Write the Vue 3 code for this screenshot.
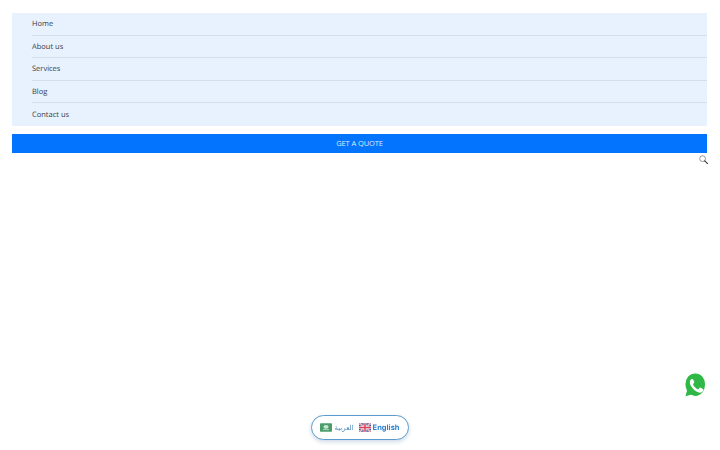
<template>
  <div class="page">
    <nav class="menu">
      <a v-for="item in items" :key="item" class="menu-item">{{ item }}</a>
    </nav>
    <button class="quote">GET A QUOTE</button>
    <div class="search-row">
      <svg class="search" viewBox="0 0 12 12" width="9" height="9">
        <circle cx="4.8" cy="4.8" r="3.9" fill="none" stroke="#555" stroke-width="0.8" />
        <path d="M7.7 7.7 11.4 11.4" stroke="#333" stroke-width="1.4" stroke-linecap="round" />
      </svg>
    </div>
    <a class="whatsapp" aria-label="WhatsApp">
      <svg viewBox="0 0 24 24" width="26" height="26">
        <path d="M12.300 .8C6.600 .8 2.700 5.400 2.700 11.400c0 2.100.5 4.100 1.400 5.800L2.500 23.200l5.600-1.700c1.300.7 2.700 1.100 4.200 1.100 5.500 0 9.500-5 9.500-11.200S17.800 .8 12.300 .8z" fill="#2fb845" stroke="#fff" stroke-width="1" />
        <path d="M9.300 6.400c-.3 0-.7.100-1 .5-.4.400-1.100 1.200-1.100 2.800s1.100 3.300 1.300 3.500c.2.200 2.200 3.700 5.300 5 2.600 1.100 3.100.9 3.600.8.600-.1 1.800-.8 2-1.600.3-.8.300-1.500.2-1.600-.1-.2-.3-.2-.6-.4l-2.100-1.100c-.3-.1-.5-.2-.7.200-.2.400-.8 1.100-1 1.300-.2.200-.4.300-.7.100-.4-.2-1.300-.6-2.500-1.800-.9-.9-1.500-2-1.700-2.400-.2-.4 0-.6.200-.8l.5-.7c.2-.2.200-.4.300-.6.100-.2 0-.5 0-.7L10.400 7.200c-.3-.7-.5-.8-.7-.8h-.4z" fill="#fff" />
      </svg>
    </a>
    <div class="lang">
      <span class="option">
        <svg class="flag" viewBox="0 0 14 10" width="12" height="9">
          <rect width="14" height="10" rx="1" fill="#4a9e6a" />
          <ellipse cx="7" cy="4.200" rx="3" ry="2.200" fill="#cfe6d6" />
          <rect x="3.500" y="7.200" width="7" height="0.800" fill="#dff0e4" />
        </svg>
        <span class="ar">العربية</span>
      </span>
      <span class="option">
        <svg class="flag" viewBox="0 0 14 10" width="12" height="9">
          <rect width="14" height="10" rx="1" fill="#4a4f95" />
          <path d="M0 0 14 10M14 0 0 10" stroke="#fff" stroke-width="2" />
          <path d="M0 0 14 10M14 0 0 10" stroke="#d8455a" stroke-width="0.800" />
          <path d="M7 0V10M0 5H14" stroke="#fff" stroke-width="3.200" />
          <path d="M7 0V10M0 5H14" stroke="#d8455a" stroke-width="1.800" />
        </svg>
        <span class="en">English</span>
      </span>
    </div>
  </div>
</template>

<script setup>
const items = ['Home', 'About us', 'Services', 'Blog', 'Contact us']
</script>

<style scoped>
.page {
  padding: 13px 13px 0 12px;
  height: 437px;
  font-family: "Open Sans", "Liberation Sans", sans-serif;
  text-rendering: geometricPrecision;
  background: #fff;
}
.menu {
  display: flex;
  flex-direction: column;
  background: #e8f2ff;
  padding-left: 20px;
}
.menu-item {
  height: 22.600px;
  box-sizing: border-box;
  display: flex;
  align-items: center;
  padding-top: 1px;
  font-size: 7.500px;
  color: #333a46;
  border-bottom: 1px solid #d3deeb;
}
.menu-item:last-child {
  border-bottom: none;
}
.quote {
  display: block;
  width: 100%;
  height: 19px;
  margin-top: 8px;
  padding: 0;
  border: none;
  background: #0274fe;
  color: #dcebff;
  font-family: inherit;
  font-size: 7.500px;
  letter-spacing: -0.100px;
}
.search-row {
  display: flex;
  justify-content: flex-end;
  padding-top: 2px;
  margin-right: -1px;
}
.search {
  display: block;
}
.whatsapp {
  position: fixed;
  left: 682px;
  top: 372px;
  width: 26px;
  height: 26px;
}
.whatsapp svg {
  display: block;
}
.lang {
  position: fixed;
  left: 311px;
  top: 415px;
  width: 98px;
  height: 25px;
  box-sizing: border-box;
  border: 1px solid #5a9ccf;
  border-radius: 13px;
  background: #fff;
  box-shadow: 0 2px 4px rgba(40, 90, 140, 0.22);
  display: flex;
  align-items: center;
  justify-content: center;
  gap: 5px;
}
.option {
  display: flex;
  align-items: center;
  gap: 2px;
}
.flag {
  display: block;
}
.ar {
  font-family: "DejaVu Sans", sans-serif;
  font-size: 7px;
  color: #4a8bbd;
}
.en {
  font-family: "Inter", sans-serif;
  font-size: 7.500px;
  font-weight: 700;
  color: #2b7fd0;
}
</style>
